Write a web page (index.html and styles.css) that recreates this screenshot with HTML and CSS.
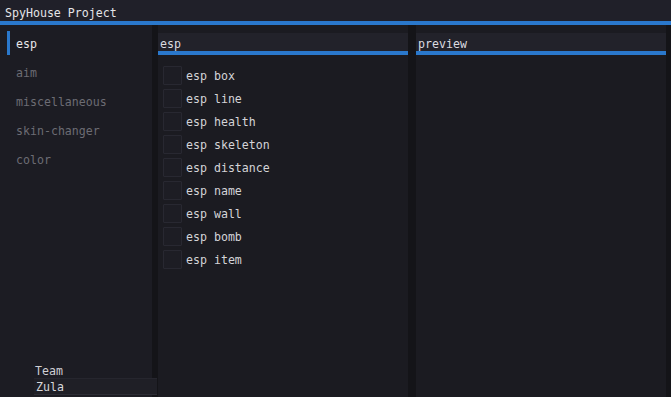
FILE: index.html
```html
<!DOCTYPE html>
<html lang="en">
<head>
    <meta charset="UTF-8">
    <title>SpyHouse Project</title>
    <link rel="stylesheet" href="styles.css">
</head>
<body>
    <div class="window">
        <div class="titlebar">SpyHouse Project</div>

        <div class="main">
            <!-- Tabs -->
            <div class="sidebar">
                <div class="tab active">esp</div>
                <div class="tab">aim</div>
                <div class="tab">miscellaneous</div>
                <div class="tab">skin-changer</div>
                <div class="tab">color</div>

                <div class="team">
                    <div class="team-label">Team</div>
                    <div class="team-input">Zula</div>
                </div>
            </div>

            <div class="divider"></div>

            <!-- Options -->
            <div class="panel">
                <div class="panel-header">esp</div>
                <div class="options">
                    <label class="option"><span class="check"></span>esp box</label>
                    <label class="option"><span class="check"></span>esp line</label>
                    <label class="option"><span class="check"></span>esp health</label>
                    <label class="option"><span class="check"></span>esp skeleton</label>
                    <label class="option"><span class="check"></span>esp distance</label>
                    <label class="option"><span class="check"></span>esp name</label>
                    <label class="option"><span class="check"></span>esp wall</label>
                    <label class="option"><span class="check"></span>esp bomb</label>
                    <label class="option"><span class="check"></span>esp item</label>
                </div>
            </div>

            <div class="divider wide"></div>

            <!-- Preview -->
            <div class="panel preview">
                <div class="panel-header">preview</div>
            </div>

            <div class="edge"></div>
        </div>
    </div>
</body>
</html>
```

FILE: styles.css
```css
:root {
    --accent: #2a78cc;
    --bg: #1a1a20;
    --panel: #1b1b21;
    --header: #22222a;
    --gap: #141418;
    --text: #d4d4d8;
    --muted: #6c6c74;
}

body {
    margin: 0;
    background: var(--bg);
    font-family: 'DejaVu Sans Mono', 'Liberation Mono', monospace;
    font-size: 11.6px;
    color: var(--text);
    overflow: hidden;
}

.window {
    width: 671px;
    height: 397px;
    display: flex;
    flex-direction: column;
}

/* Title Bar */
.titlebar {
    height: 21px;
    line-height: 26px;
    padding-left: 5px;
    background: #202029;
    color: #e4e4e8;
    border-bottom: 4px solid var(--accent);
    box-sizing: content-box;
}

.main {
    flex: 1;
    display: flex;
    min-height: 0;
}

/* Sidebar Tabs */
.sidebar {
    width: 152px;
    padding-top: 6px;
    padding-bottom: 2px;
    display: flex;
    flex-direction: column;
    gap: 5px;
    background: #1c1c23;
    box-sizing: border-box;
}

.tab {
    height: 24px;
    line-height: 27px;
    margin-left: 7px;
    padding-left: 6px;
    border-left: 3px solid transparent;
    color: var(--muted);
}

.tab.active {
    border-left-color: var(--accent);
    color: #e8e8ec;
}

.team {
    margin-top: auto;
    padding-left: 34px;
}

.team-label {
    padding-left: 1px;
    height: 17px;
    line-height: 21px;
    color: #cfcfd4;
}

.team-input {
    width: 121px;
    height: 15px;
    line-height: 17px;
    padding-left: 2px;
    background: #1f1f26;
    border-top: 1px solid #26262e;
    border-bottom: 1px solid #2c2c34;
    color: #d8d8dc;
    box-sizing: content-box;
    position: relative;
}

.divider {
    width: 6px;
    background: var(--gap);
}

.divider.wide {
    width: 8px;
}

.edge {
    width: 5px;
    background: var(--gap);
}

/* Panels */
.panel {
    width: 250px;
    padding-top: 8px;
    background: var(--panel);
    display: flex;
    flex-direction: column;
}

.panel.preview {
    flex: 1;
}

.panel-header {
    height: 18px;
    line-height: 22px;
    padding-left: 2px;
    background: var(--header);
    border-bottom: 4px solid var(--accent);
    color: #dcdce0;
}

.options {
    padding: 11px 0 0 5px;
    display: flex;
    flex-direction: column;
    gap: 4px;
}

.option {
    display: flex;
    align-items: flex-start;
    gap: 4px;
    height: 19px;
    line-height: 21px;
    color: var(--text);
}

.check {
    width: 17px;
    height: 17px;
    border: 1px solid #282831;
    background: #1d1d24;
    border-radius: 1px;
}
```
